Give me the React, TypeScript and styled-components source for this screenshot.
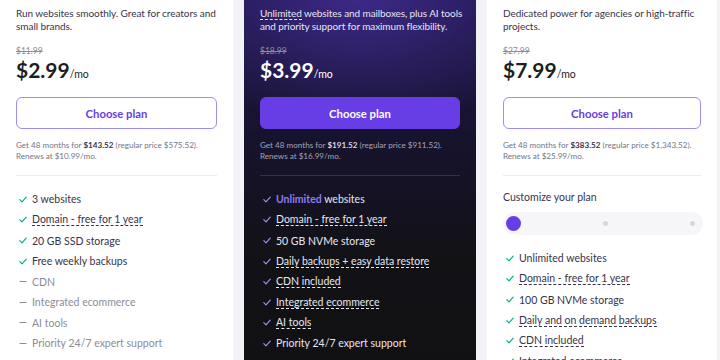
import React from 'react';
import styled, { createGlobalStyle } from 'styled-components';

const GlobalStyle = createGlobalStyle`
  html, body {
    margin: 0;
    padding: 0;
    height: 360px;
    overflow: hidden;
    background: #f2f3f6;
    font-family: Lato, "Noto Sans", sans-serif;
  }
`;

const Row = styled.div`
  display: grid;
  grid-template-columns: 233px 232px 230px;
  column-gap: 11px;
  height: 360px;
  overflow: hidden;
`;

const Card = styled.div<{ $dark?: boolean }>`
  padding: 7px 16px 0;
  height: 100%;
  box-sizing: border-box;
  color: ${p => (p.$dark ? '#ffffff' : '#1d1e20')};
  background: ${p =>
    p.$dark
      ? 'radial-gradient(ellipse 90% 35% at 50% 0%, rgba(84, 56, 190, 0.55), transparent 100%), linear-gradient(180deg, #1f1645 0%, #171330 35%, #121216 70%, #111113 100%)'
      : '#ffffff'};
`;

const Desc = styled.p<{ $dark?: boolean }>`
  margin: 0 ${p => (p.$dark ? '-4px' : '0')} 0 0;
  font-size: 10px;
  letter-spacing: ${p => (p.$dark ? '-0.1px' : '-0.05px')};
  line-height: 12.5px;
  color: ${p => (p.$dark ? '#e6e6f0' : '#36344d')};
`;

const Dotted = styled.span`
  border-bottom: 1px dashed currentColor;
`;

const OldPrice = styled.div<{ $dark?: boolean }>`
  margin-top: 13px;
  font-size: 8.5px;
  line-height: 12px;
  text-decoration: line-through;
  color: ${p => (p.$dark ? '#8a8a9c' : '#8c8c98')};
`;

const Price = styled.div`
  display: flex;
  align-items: baseline;
  font-size: 21px;
  font-weight: 700;
  line-height: 26px;
  & span {
    font-size: 10.5px;
    font-weight: 400;
  }
`;

const Button = styled.button<{ $filled?: boolean }>`
  display: block;
  width: 100%;
  height: 32px;
  margin-top: 10px;
  border-radius: 6px;
  border: 1px solid ${p => (p.$filled ? '#673de6' : '#9d8df5')};
  background: ${p => (p.$filled ? '#673de6' : '#ffffff')};
  color: ${p => (p.$filled ? '#ffffff' : '#673de6')};
  font-family: inherit;
  font-size: 11.3px;
  font-weight: 700;
  cursor: pointer;
`;

const Note = styled.p<{ $dark?: boolean }>`
  margin: 11px 0 0;
  font-size: 8.1px;
  line-height: 10.5px;
  color: ${p => (p.$dark ? '#a4a4b6' : '#727586')};
  & b {
    font-weight: 700;
    color: ${p => (p.$dark ? '#d8d8e4' : '#36344d')};
  }
`;

const Divider = styled.hr<{ $dark?: boolean }>`
  margin: 14px 0 0;
  border: 0;
  border-top: 1px solid ${p => (p.$dark ? '#34323f' : '#ececf0')};
`;

const Features = styled.ul`
  list-style: none;
  margin: 17px 0 0;
  padding: 0;
  display: flex;
  flex-direction: column;
  gap: 7.9px;
`;

const Item = styled.li<{ $off?: boolean; $dark?: boolean }>`
  display: flex;
  align-items: center;
  gap: 5px;
  height: 12.7px;
  padding-left: 3px;
  font-size: 10.5px;
  color: ${p => (p.$off ? '#8c8c98' : p.$dark ? '#e6e6f0' : '#36344d')};
`;

const Accent = styled.span`
  color: #8c7cf8;
  font-weight: 700;
`;

const Label = styled.div`
  margin-top: 15px;
  font-size: 10.5px;
  color: #36344d;
`;

const Track = styled.div`
  display: flex;
  align-items: center;
  justify-content: space-between;
  box-sizing: border-box;
  margin-top: 9px;
  height: 23px;
  width: 200px;
  padding: 0 8px 0 3px;
  border-radius: 12px;
  background: #f6f6f8;
`;

const Knob = styled.div`
  width: 15px;
  height: 15px;
  border-radius: 50%;
  background: #673de6;
`;

const Dot = styled.div`
  width: 5px;
  height: 5px;
  border-radius: 50%;
  background: #d6d6dc;
`;

const Check = ({ color }: { color: string }) => (
  <svg width="8" height="7" viewBox="0 0 8 7" style={{ flexShrink: 0 }}>
    <path d="M0.8 3.6 L3 5.8 L7.2 1.2" fill="none" stroke={color} strokeWidth="1.2" strokeLinecap="round" strokeLinejoin="round" />
  </svg>
);

const Dash = () => (
  <svg width="8" height="7" viewBox="0 0 8 7" style={{ flexShrink: 0 }}>
    <path d="M1 3.5 H7" stroke="#8c8c98" strokeWidth="1.2" strokeLinecap="round" />
  </svg>
);

type Feat = { text: React.ReactNode; dotted?: boolean; off?: boolean };

const basic: Feat[] = [
  { text: '3 websites' },
  { text: 'Domain - free for 1 year', dotted: true },
  { text: '20 GB SSD storage' },
  { text: 'Free weekly backups' },
  { text: 'CDN', off: true },
  { text: 'Integrated ecommerce', off: true },
  { text: 'AI tools', off: true },
  { text: 'Priority 24/7 expert support', off: true },
];

const business: Feat[] = [
  { text: <><Accent>Unlimited</Accent> websites</> },
  { text: 'Domain - free for 1 year', dotted: true },
  { text: '50 GB NVMe storage' },
  { text: 'Daily backups + easy data restore', dotted: true },
  { text: 'CDN included', dotted: true },
  { text: 'Integrated ecommerce', dotted: true },
  { text: 'AI tools', dotted: true },
  { text: 'Priority 24/7 expert support' },
];

const cloud: Feat[] = [
  { text: 'Unlimited websites' },
  { text: 'Domain - free for 1 year', dotted: true },
  { text: '100 GB NVMe storage' },
  { text: 'Daily and on demand backups', dotted: true },
  { text: 'CDN included', dotted: true },
  { text: 'Integrated ecommerce', dotted: true },
];

const FeatureList = ({ items, dark }: { items: Feat[]; dark?: boolean }) => (
  <Features>
    {items.map((f, i) => (
      <Item key={`feat_${i}`} $off={f.off} $dark={dark}>
        {f.off ? <Dash /> : <Check color={dark ? '#9b8cf5' : '#00b090'} />}
        {f.dotted ? <Dotted>{f.text}</Dotted> : <span>{f.text}</span>}
      </Item>
    ))}
  </Features>
);

const App: React.FC = () => (
  <>
    <GlobalStyle />
    <Row>
      <Card>
        <Desc>Run websites smoothly. Great for creators and small brands.</Desc>
        <OldPrice>$11.99</OldPrice>
        <Price>$2.99<span>/mo</span></Price>
        <Button>Choose plan</Button>
        <Note>
          Get 48 months for <b>$143.52</b> (regular price $575.52).<br />Renews at $10.99/mo.
        </Note>
        <Divider />
        <FeatureList items={basic} />
      </Card>

      <Card $dark>
        <Desc $dark>
          <Dotted>Unlimited</Dotted> websites and mailboxes, plus AI tools and priority support for maximum flexibility.
        </Desc>
        <OldPrice $dark>$18.99</OldPrice>
        <Price>$3.99<span>/mo</span></Price>
        <Button $filled>Choose plan</Button>
        <Note $dark>
          Get 48 months for <b>$191.52</b> (regular price $911.52).<br />Renews at $16.99/mo.
        </Note>
        <Divider $dark />
        <FeatureList items={business} dark />
      </Card>

      <Card>
        <Desc>Dedicated power for agencies or high-traffic projects.</Desc>
        <OldPrice>$27.99</OldPrice>
        <Price>$7.99<span>/mo</span></Price>
        <Button>Choose plan</Button>
        <Note>
          Get 48 months for <b>$383.52</b> (regular price $1,343.52).<br />Renews at $25.99/mo.
        </Note>
        <Divider />
        <Label>Customize your plan</Label>
        <Track>
          <Knob />
          <Dot />
          <Dot />
        </Track>
        <FeatureList items={cloud} />
      </Card>
    </Row>
  </>
);

export default App;
